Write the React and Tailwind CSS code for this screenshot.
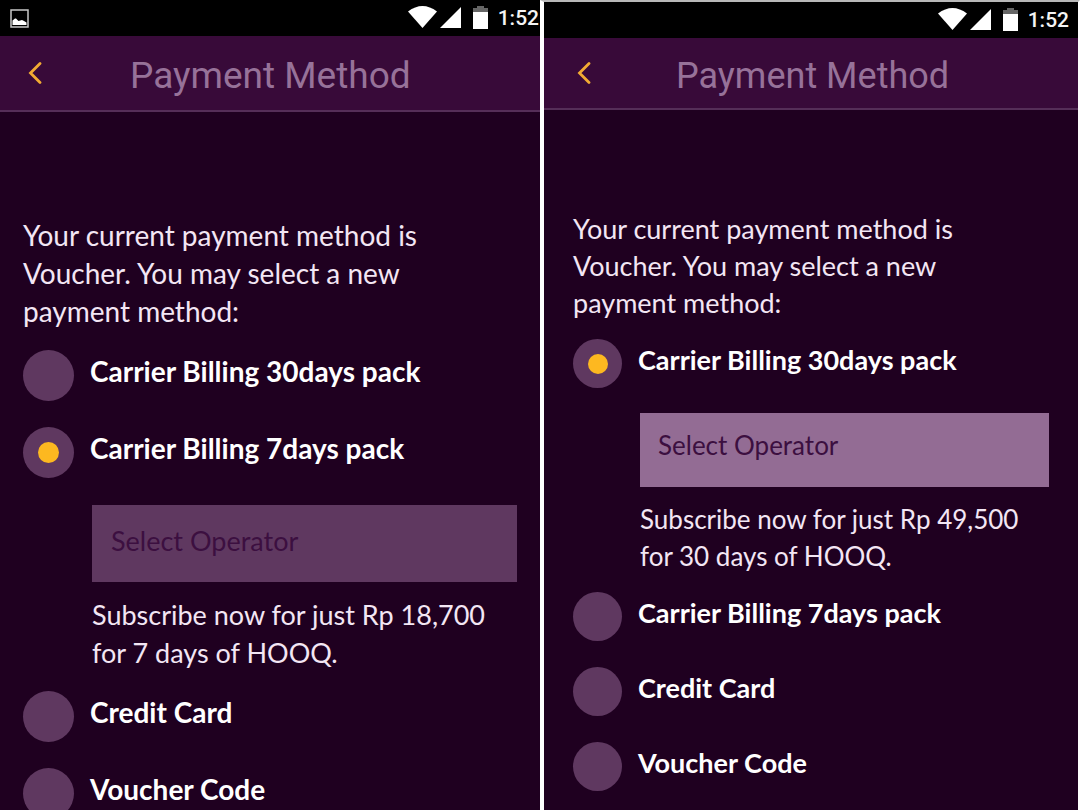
import { useState } from "react";

const methods = [
  { key: "carrier30", label: "Carrier Billing 30days pack", note: "Subscribe now for just Rp 49,500 for 30 days of HOOQ." },
  { key: "carrier7", label: "Carrier Billing 7days pack", note: "Subscribe now for just Rp 18,700 for 7 days of HOOQ." },
  { key: "card", label: "Credit Card" },
  { key: "voucher", label: "Voucher Code" },
];

const large = {
  header: "h-[76px]",
  back: "w-[70px]",
  title: "pl-[60px] pt-[6px] text-[37px]",
  body: "px-[23px] pt-[104px]",
  intro: "text-[28px] leading-[38px]",
  list: "mt-[20px] gap-[26px]",
  row: "gap-[16px]",
  radio: "size-[51px] before:size-[21px]",
  label: "text-[28px] leading-[42px]",
  details: "mt-[27px] pl-[69px] -mb-[7px]",
  select: "h-[77px] bg-[#5f3860] text-[#3c0f40]",
  selectText: "px-[19px] pb-[4px] text-[27px]",
  note: "mt-[14px] text-[27px] leading-[38px]",
};

const small = {
  header: "h-[72px]",
  back: "w-[80px]",
  title: "pl-[52px] pt-[6px] text-[36px]",
  body: "px-[29px] pt-[100px]",
  intro: "text-[27px] leading-[37px]",
  list: "mt-[18px] gap-[26px]",
  row: "gap-[16px]",
  radio: "size-[49px] before:size-[20px]",
  label: "text-[27px] leading-[42px]",
  details: "mt-[25px] pl-[67px] -mb-[9px]",
  select: "h-[74px] bg-[#936c94] text-[#3c0f40]",
  selectText: "px-[18px] pb-[10px] text-[26px]",
  note: "mt-[14px] text-[26px] leading-[37px]",
};

const StatusBar = ({ hasPicture, className }) => (
  <div className={`flex h-[36px] shrink-0 items-center bg-black ${className}`}>
    {hasPicture && (
      <svg viewBox="0 0 19 19" className="ml-[10px] size-[19px]" aria-hidden="true">
        <rect x="1" y="1" width="17" height="17" fill="none" stroke="#c8c8c8" strokeWidth="1.5" />
        <path d="M2.5 16V11.5L5 9.5L6 9.5L8.5 12L12 11L14 12L16.500 13.500V16Z" fill="#fff" />
      </svg>
    )}
    <div className="ml-auto flex items-center pb-[2px]">
      <svg viewBox="0 0 29 22" className="h-[22px] w-[29px]" aria-hidden="true">
        <path d="M0 5.500Q14.500 -5.500 29 5.500L14.500 22Z" fill="#fff" />
      </svg>
      <svg viewBox="0 0 21 21" className="ml-[3px] size-[21px]" aria-hidden="true">
        <path d="M21 0V21H0Z" fill="#fff" />
      </svg>
      <svg viewBox="0 0 15 23" className="ml-[12px] h-[23px] w-[15px]" aria-hidden="true">
        <path d="M4 0H11V2H15V7H0V2H4Z" fill="#666" />
        <path d="M0 6H15V23H0Z" fill="#fff" />
      </svg>
      <span className="ml-[10px] pt-[2px] font-['Roboto',sans-serif] text-[21px] font-medium leading-none text-[#f4f4f4]">
        1:52
      </span>
    </div>
  </div>
);

const PaymentScreen = ({ id, size, defaultMethod }) => {
  const [selected, setSelected] = useState(defaultMethod);

  return (
    <>
      <header className={`flex shrink-0 items-center border-b-2 border-[#552e58] bg-[#380a39] ${size.header}`}>
        <button type="button" aria-label="Back" className={`flex h-full shrink-0 items-center justify-center ${size.back}`}>
          <svg viewBox="0 0 14 22" className="h-[22px] w-[14px]" aria-hidden="true">
            <path d="M12 1.500L2.500 11L12 20.500" fill="none" stroke="#f2ab33" strokeWidth="2.800" strokeLinecap="round" />
          </svg>
        </button>
        <h1 className={`whitespace-nowrap font-['Roboto',sans-serif] font-normal text-[#977299] ${size.title}`}>
          Payment Method
        </h1>
      </header>

      <main className={size.body}>
        <p className={size.intro}>
          Your current payment method is
          <br />
          Voucher. You may select a new
          <br />
          payment method:
        </p>

        <div role="radiogroup" aria-label="Payment method" className={`flex flex-col ${size.list}`}>
          {methods.map((method) => {
            const isActive = method.key === selected;
            const inputId = `${id}-${method.key}`;
            return (
              <div key={method.key}>
                <div className={`flex items-start ${size.row}`}>
                  <input
                    id={inputId}
                    type="radio"
                    name={`${id}-method`}
                    checked={isActive}
                    onChange={() => setSelected(method.key)}
                    className={`grid shrink-0 appearance-none place-items-center rounded-full bg-[#5f3860] before:rounded-full checked:before:bg-[#fdb820] ${size.radio}`}
                  />
                  <label htmlFor={inputId} className={`whitespace-nowrap font-bold text-white ${size.label}`}>
                    {method.label}
                  </label>
                </div>
                {isActive && method.note && (
                  <div className={size.details}>
                    <select
                      aria-label="Select Operator"
                      className={`block w-full appearance-none ${size.select} ${size.selectText}`}
                    >
                      <option>Select Operator</option>
                    </select>
                    <p className={size.note}>{method.note}</p>
                  </div>
                )}
              </div>
            );
          })}
        </div>
      </main>
    </>
  );
};

const App = () => {
  return (
    <div className="grid h-screen grid-cols-2 overflow-hidden bg-[#1f0020] font-['Lato',sans-serif] text-[#f3e6f4]">
      <section className="flex min-w-0 flex-col">
        <StatusBar hasPicture className="pr-[1px]" />
        <PaymentScreen id="left" size={large} defaultMethod="carrier7" />
      </section>
      <section className="flex min-w-0 flex-col border-l-4 border-r-2 border-t-2 border-l-white border-r-white border-t-[#b8b8b8]">
        <StatusBar className="pr-[9px]" />
        <PaymentScreen id="right" size={small} defaultMethod="carrier30" />
      </section>
    </div>
  );
};

export default App;
